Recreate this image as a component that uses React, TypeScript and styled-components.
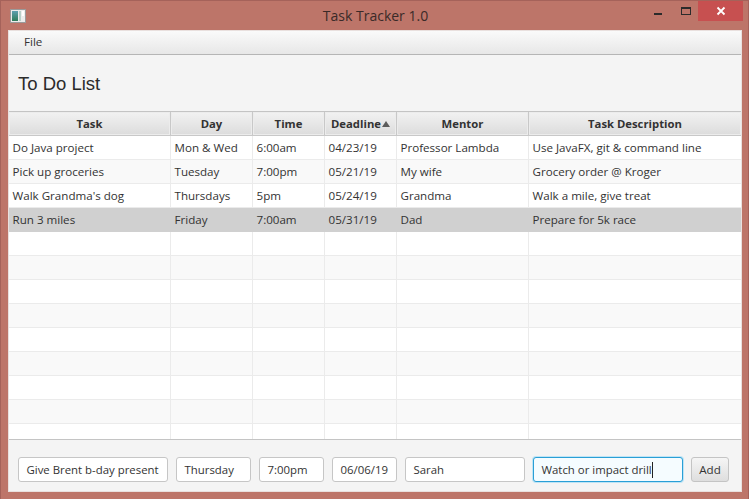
import React from "react";
import styled, { createGlobalStyle } from "styled-components";

const uiFont = `"Open Sans", "Noto Sans", sans-serif`;

const GlobalStyle = createGlobalStyle`
  html, body {
    margin: 0;
    padding: 0;
    width: 749px;
    height: 499px;
    overflow: hidden;
    background: #bd7569;
  }
  * { box-sizing: border-box; }
`;

const Frame = styled.div`
  width: 749px;
  height: 499px;
  display: flex;
  flex-direction: column;
  background: #bd7569;
  border: 1px solid #a5625a;
  border-bottom: 0;
  padding: 0 6px 7px 7px;
`;

const TitleBar = styled.div`
  height: 29px;
  flex: none;
  display: grid;
  grid-template-columns: 1fr auto 1fr;
  align-items: start;
  margin-right: -1px;
`;

const AppIcon = styled.svg`
  width: 16px;
  height: 14px;
  margin: 8px 0 0 2px;
  display: block;
`;

const TitleText = styled.div`
  font: 14px/20px ${uiFont};
  color: #3a2a28;
  padding-top: 5px;
`;

const Controls = styled.div`
  display: flex;
  justify-content: flex-end;
  align-items: flex-start;
  height: 21px;
`;

const ControlBtn = styled.div<{ $w: number }>`
  width: ${(p) => p.$w}px;
  height: 20px;
  display: flex;
  align-items: center;
  justify-content: center;
`;

const CloseBtn = styled(ControlBtn)`
  background: #c75050;
`;

const Content = styled.div`
  flex: 1;
  display: flex;
  flex-direction: column;
  background: #f4f4f4;
  border: 1px solid #e9e0de;
  min-height: 0;
`;

const MenuBar = styled.div`
  height: 24px;
  flex: none;
  display: flex;
  align-items: center;
  padding: 0 0 1px 15px;
  background: linear-gradient(#fafafa, #e7e7e7);
  border-bottom: 1px solid #b5b5b5;
  font: 11.6px/16px ${uiFont};
  color: #333;
`;

const Heading = styled.div`
  height: 56px;
  flex: none;
  display: flex;
  align-items: center;
  padding: 1px 0 0 9px;
  font: 18.5px/22px "Liberation Sans", Arial, sans-serif;
  color: #2b2b2b;
`;

const Table = styled.div`
  flex: 1;
  min-height: 0;
  overflow: hidden;
  background: #fff;
  border-top: 1px solid #c4c4c4;
  border-bottom: 1px solid #c4c4c4;
  display: flex;
  flex-direction: column;
`;

const HeaderRow = styled.div`
  height: 24px;
  flex: none;
  display: flex;
  border-bottom: 1px solid #c8c8c8;
  background: #c8c8c8;
`;

const HeaderCell = styled.div<{ $w: number }>`
  width: ${(p) => p.$w}px;
  flex: none;
  display: flex;
  align-items: center;
  justify-content: center;
  padding-top: 1px;
  background: linear-gradient(#f2f2f2, #dcdcdc);
  border-right: 1px solid #c8c8c8;
  box-shadow: inset 0 0 0 1px #ececec;
  font: 700 11.3px/16px ${uiFont};
  color: #333;
`;

const SortArrow = styled.span`
  width: 0;
  height: 0;
  margin: 0 0 1px 1px;
  border-left: 4.5px solid transparent;
  border-right: 4.5px solid transparent;
  border-bottom: 6px solid #5c5c5c;
`;

const Row = styled.div<{ $alt: boolean; $selected: boolean }>`
  height: 24px;
  flex: none;
  display: flex;
  background: ${(p) => (p.$selected ? "#d0d0d0" : p.$alt ? "#f9f9f9" : "#fff")};
`;

const Cell = styled.div<{ $w: number; $selected: boolean }>`
  width: ${(p) => p.$w}px;
  flex: none;
  padding: 0 0 0 3.5px;
  display: flex;
  align-items: center;
  white-space: nowrap;
  overflow: hidden;
  border-right: 1px solid ${(p) => (p.$selected ? "#d0d0d0" : "#ebebeb")};
  border-bottom: 1px solid ${(p) => (p.$selected ? "#d0d0d0" : "#ebebeb")};
  font: 11.6px/16px ${uiFont};
  color: #333;
`;

const Form = styled.div`
  height: 51px;
  flex: none;
  display: flex;
  gap: 8px;
  padding: 17px 0 0 9px;
`;

const Field = styled.div<{ $w: number; $focused?: boolean }>`
  width: ${(p) => p.$w}px;
  height: 25px;
  flex: none;
  display: flex;
  align-items: center;
  padding: 0 0 0 7.5px;
  background: ${(p) => (p.$focused ? "#f5fcff" : "#fff")};
  border: 1px solid ${(p) => (p.$focused ? "#2a9fd6" : "#c6c6c6")};
  border-radius: 3px;
  box-shadow: ${(p) => (p.$focused ? "0 0 0 1px #bfe4f5" : "none")};
  font: 11.4px/16px ${uiFont};
  color: #333;
  white-space: nowrap;
`;

const Caret = styled.span`
  width: 1px;
  height: 16px;
  background: #222;
`;

const AddButton = styled.div`
  width: 38px;
  height: 25px;
  flex: none;
  display: flex;
  align-items: center;
  justify-content: center;
  border: 1px solid #c4c4c4;
  border-radius: 3px;
  background: linear-gradient(#f5f5f5, #dedede);
  font: 11.6px/16px ${uiFont};
  color: #333;
`;

const columns = [
  { name: "Task", width: 162 },
  { name: "Day", width: 82 },
  { name: "Time", width: 72 },
  { name: "Deadline", width: 72 },
  { name: "Mentor", width: 132 },
  { name: "Task Description", width: 213 },
];

const tasks = [
  ["Do Java project", "Mon & Wed", "6:00am", "04/23/19", "Professor Lambda", "Use JavaFX, git & command line"],
  ["Pick up groceries", "Tuesday", "7:00pm", "05/21/19", "My wife", "Grocery order @ Kroger"],
  ["Walk Grandma's dog", "Thursdays", "5pm", "05/24/19", "Grandma", "Walk a mile, give treat"],
  ["Run 3 miles", "Friday", "7:00am", "05/31/19", "Dad", "Prepare for 5k race"],
];

const ROW_COUNT = 13;
const SELECTED_ROW = 3;

export default function App() {
  const rows = Array.from({ length: ROW_COUNT }, (_, i) => tasks[i] ?? ["", "", "", "", "", ""]);

  return (
    <>
      <GlobalStyle />
      <Frame>
        <TitleBar>
          <AppIcon viewBox="0 0 16 14">
            <defs>
              <linearGradient id="iconFill" x1="0" y1="0" x2="0" y2="1">
                <stop offset="0" stopColor="#5fa0b0" />
                <stop offset="1" stopColor="#2f7d5a" />
              </linearGradient>
            </defs>
            <rect x="0.5" y="0.5" width="15" height="13" fill="#ececec" stroke="#9a9a9a" />
            <rect x="2" y="2" width="6" height="10" fill="url(#iconFill)" />
            <rect x="9" y="2" width="2" height="10" fill="#b7cfc8" />
            <rect x="12" y="2" width="2" height="5" fill="#fff" />
          </AppIcon>
          <TitleText>Task Tracker 1.0</TitleText>
          <Controls>
            <ControlBtn $w={30}>
              <svg width="10" height="10" viewBox="0 0 10 10">
                <rect x="1" y="7" width="8" height="2" fill="#2b2b2b" />
              </svg>
            </ControlBtn>
            <ControlBtn $w={25}>
              <svg width="12" height="10" viewBox="0 0 12 10">
                <rect x="1.5" y="1.5" width="9" height="7" fill="none" stroke="#2b2b2b" />
                <rect x="1" y="1" width="10" height="2" fill="#2b2b2b" />
              </svg>
            </ControlBtn>
            <CloseBtn $w={45}>
              <svg width="10" height="10" viewBox="0 0 10 10">
                <path d="M1.5 1.5 L8.5 8.5 M8.5 1.5 L1.5 8.5" stroke="#fff" strokeWidth="1.8" />
              </svg>
            </CloseBtn>
          </Controls>
        </TitleBar>
        <Content>
          <MenuBar>File</MenuBar>
          <Heading>To Do List</Heading>
          <Table>
            <HeaderRow>
              {columns.map((c) => (
                <HeaderCell key={c.name} $w={c.width}>
                  {c.name}
                  {c.name === "Deadline" && <SortArrow />}
                </HeaderCell>
              ))}
            </HeaderRow>
            {rows.map((row, i) => (
              <Row key={i} $alt={i % 2 === 1} $selected={i === SELECTED_ROW}>
                {row.map((text, j) => (
                  <Cell key={j} $w={columns[j].width} $selected={i === SELECTED_ROW}>
                    {text}
                  </Cell>
                ))}
              </Row>
            ))}
          </Table>
          <Form>
            <Field $w={150}>Give Brent b-day present</Field>
            <Field $w={75}>Thursday</Field>
            <Field $w={65}>7:00pm</Field>
            <Field $w={65}>06/06/19</Field>
            <Field $w={120}>Sarah</Field>
            <Field $w={150} $focused>
              Watch or impact drill
              <Caret />
            </Field>
            <AddButton>Add</AddButton>
          </Form>
        </Content>
      </Frame>
    </>
  );
}
